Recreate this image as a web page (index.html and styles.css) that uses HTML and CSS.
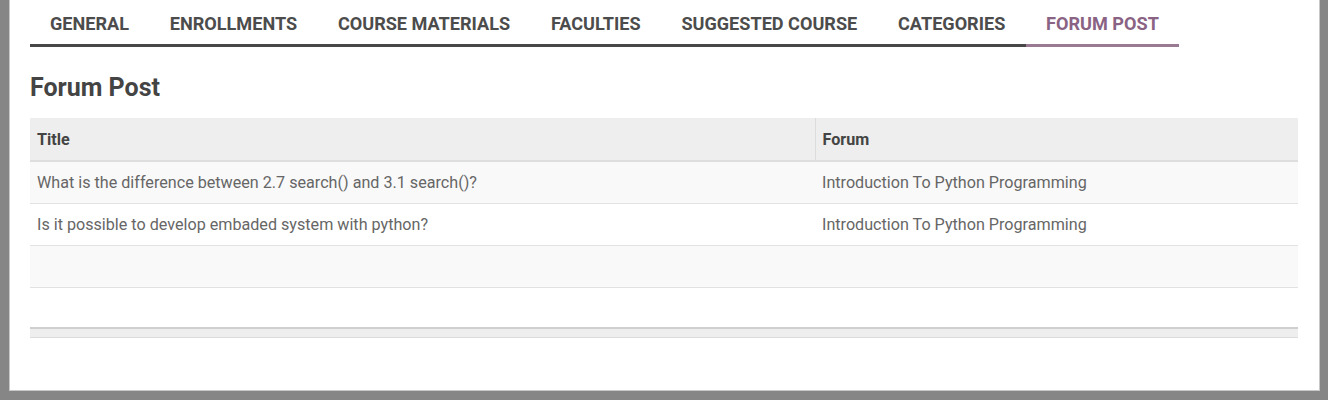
FILE: index.html
```html
<!DOCTYPE html>
<html>
<head>
<meta charset="utf-8">
<link rel="stylesheet" href="styles.css">
</head>
<body>
<div class="sheet">
  <ul class="tabs">
    <li class="tab">GENERAL</li>
    <li class="tab">ENROLLMENTS</li>
    <li class="tab">COURSE MATERIALS</li>
    <li class="tab">FACULTIES</li>
    <li class="tab">SUGGESTED COURSE</li>
    <li class="tab">CATEGORIES</li>
    <li class="tab active">FORUM POST</li>
  </ul>
  <h2 class="title">Forum Post</h2>
  <table class="list">
    <colgroup><col class="c-title"><col class="c-forum"></colgroup>
    <thead>
      <tr><th>Title</th><th class="sep">Forum</th></tr>
    </thead>
    <tbody>
      <tr class="odd"><td>What is the difference between 2.7 search() and 3.1 search()?</td><td>Introduction To Python Programming</td></tr>
      <tr><td>Is it possible to develop embaded system with python?</td><td>Introduction To Python Programming</td></tr>
      <tr class="odd"><td></td><td></td></tr>
      <tr class="blank"><td></td><td></td></tr>
    </tbody>
    <tfoot>
      <tr><td></td><td></td></tr>
    </tfoot>
  </table>
</div>
</body>
</html>
```

FILE: styles.css
```css
html, body {
  margin: 0;
  padding: 0;
}
body {
  background: #868686;
  font-family: Roboto, "Liberation Sans", sans-serif;
  height: 400px;
  overflow: hidden;
}
.sheet {
  box-sizing: border-box;
  margin: 0 8px 0 9px;
  height: 391px;
  background: #fff;
  border: 1px solid #c8c8c8;
  border-top: none;
  padding: 0 20px 0 20px;
}
.tabs {
  list-style: none;
  margin: 0;
  padding: 0;
  display: flex;
}
.tab {
  padding: 14px 20.4px 0 20.4px;
  height: 30px;
  border-bottom: 3px solid #474747;
  font-size: 18.1px;
  font-weight: 700;
  color: #4c4c4c;
  line-height: 20px;
  white-space: nowrap;
}
.tab:first-child {
  padding-left: 20px;
}
.tab.active {
  color: #8a6283;
  border-bottom-color: #9a7a93;
}
.title {
  margin: 0 0 26px 0;
  padding: 27px 0 0 0;
  height: 45px;
  box-sizing: border-box;
  font-size: 25px;
  line-height: 28px;
  font-weight: 700;
  color: #444;
}
.list {
  width: 1268px;
  border-collapse: collapse;
  table-layout: fixed;
  font-size: 16.15px;
}
.c-title { width: 785px; }
.c-forum { width: 483px; }
.list th {
  background: #eee;
  color: #444;
  font-weight: 700;
  text-align: left;
  height: 43px;
  padding: 0 7px;
  border-bottom: 2px solid #dedede;
  box-sizing: border-box;
}
.list th.sep {
  border-left: 1px solid #dcdcdc;
}
.list td {
  color: #666;
  height: 42px;
  padding: 0 7px;
  border-bottom: 1px solid #e2e2e2;
  box-sizing: border-box;
}
.list tr.odd td {
  background: #f9f9f9;
}
.list tr.blank td {
  height: 41px;
  border-bottom: none;
}
.list tfoot td {
  height: 9px;
  padding: 0;
  background: #eee;
  border-top: 2px solid #cfcfcf;
  border-bottom: 1px solid #dcdcdc;
}
```
